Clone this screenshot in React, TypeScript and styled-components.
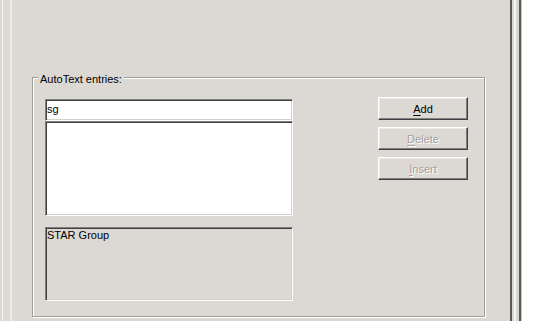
import { createGlobalStyle, styled } from 'styled-components';

const GlobalStyle = createGlobalStyle`
  html, body {
    margin: 0;
    padding: 0;
  }
  body {
    width: 540px;
    height: 321px;
    overflow: hidden;
    background: #fffffd;
    font-family: "Liberation Sans", Arial, sans-serif;
    font-size: 11px;
    color: #000;
  }
`;

const Window = styled.div`
  display: flex;
  width: 540px;
  height: 321px;
`;

const TabPage = styled.div`
  display: flex;
  align-items: flex-start;
  width: 510px;
  background: #dcd9d5;
`;

const LeftRail = styled.div`
  align-self: stretch;
  width: 29px;
  margin-left: 2px;
  border-left: 1px solid #f3f1ee;
  background: linear-gradient(
    to right,
    transparent 7px,
    #eeece9 7px,
    #eeece9 9px,
    transparent 9px
  );
`;

const GroupBox = styled.div`
  position: relative;
  box-sizing: border-box;
  width: 453px;
  height: 240px;
  margin-top: 77px;
  padding: 19px 16px 0 12px;
  border: 1px solid #a09d99;
  box-shadow: inset 1px 1px 0 #fff, 1px 1px 0 #fff;
  display: flex;
  justify-content: space-between;
`;

const Caption = styled.span`
  position: absolute;
  top: -5px;
  left: 5px;
  padding: 0 2px;
  line-height: 13px;
  background: #dcd9d5;
`;

const LeftColumn = styled.div`
  display: flex;
  flex-direction: column;
  width: 248px;
  padding-top: 2px;
`;

const sunken = `
  box-sizing: border-box;
  border-style: solid;
  border-width: 1px;
  border-color: #808080 #fff #fff #808080;
  box-shadow: inset 1px 1px 0 #404040, inset -1px -1px 0 #d4d0c8;
`;

const ComboEdit = styled.div`
  ${sunken}
  height: 22px;
  padding: 0 0 0 1px;
  line-height: 19px;
  background: #fff;
`;

const ComboList = styled.div`
  ${sunken}
  height: 95px;
  background: #fff;
`;

const StaticBox = styled.div`
  ${sunken}
  height: 74px;
  margin-top: 11px;
  padding: 1px 0 0 1px;
  line-height: 13px;
  background: #dcd9d5;
`;

const ButtonColumn = styled.div`
  display: flex;
  flex-direction: column;
  gap: 7px;
`;

const Button = styled.button<{ $disabled?: boolean }>`
  box-sizing: border-box;
  width: 90px;
  height: 23px;
  padding: 0;
  font-family: "Liberation Sans", Arial, sans-serif;
  font-size: 11px;
  background: #dcd9d5;
  border-style: solid;
  border-width: 1px;
  border-color: #fff #404040 #404040 #fff;
  box-shadow: inset -1px -1px 0 #808080, inset 1px 1px 0 #eceae6;
  color: ${(p) => (p.$disabled ? '#a3a09c' : '#000')};
  text-shadow: ${(p) => (p.$disabled ? '1px 1px 0 #fff' : 'none')};

  u {
    text-decoration-thickness: 1px;
    text-underline-offset: 2px;
  }
`;

const Frame = styled.div`
  box-sizing: border-box;
  width: 11px;
  border-left: 2px solid #5a5a5a;
  border-right: 2px solid #5a5a5a;
  background: linear-gradient(
    to right,
    #d9d7d3 2px,
    #f6f5f3 2px,
    #f6f5f3 4px,
    #d9d7d3 4px
  );
`;

const Outside = styled.div`
  flex: 1;
  border-left: 1px solid #c9c7c3;
  background: #fffffd;
`;

export default function App() {
  return (
    <Window>
      <GlobalStyle />
      <TabPage>
        <LeftRail />
        <GroupBox>
          <Caption>AutoText entries:</Caption>
          <LeftColumn>
            <ComboEdit>sg</ComboEdit>
            <ComboList />
            <StaticBox>STAR Group</StaticBox>
          </LeftColumn>
          <ButtonColumn>
            <Button>
              <u>A</u>dd
            </Button>
            <Button $disabled>
              <u>D</u>elete
            </Button>
            <Button $disabled>
              <u>I</u>nsert
            </Button>
          </ButtonColumn>
        </GroupBox>
      </TabPage>
      <Frame />
      <Outside />
    </Window>
  );
}
